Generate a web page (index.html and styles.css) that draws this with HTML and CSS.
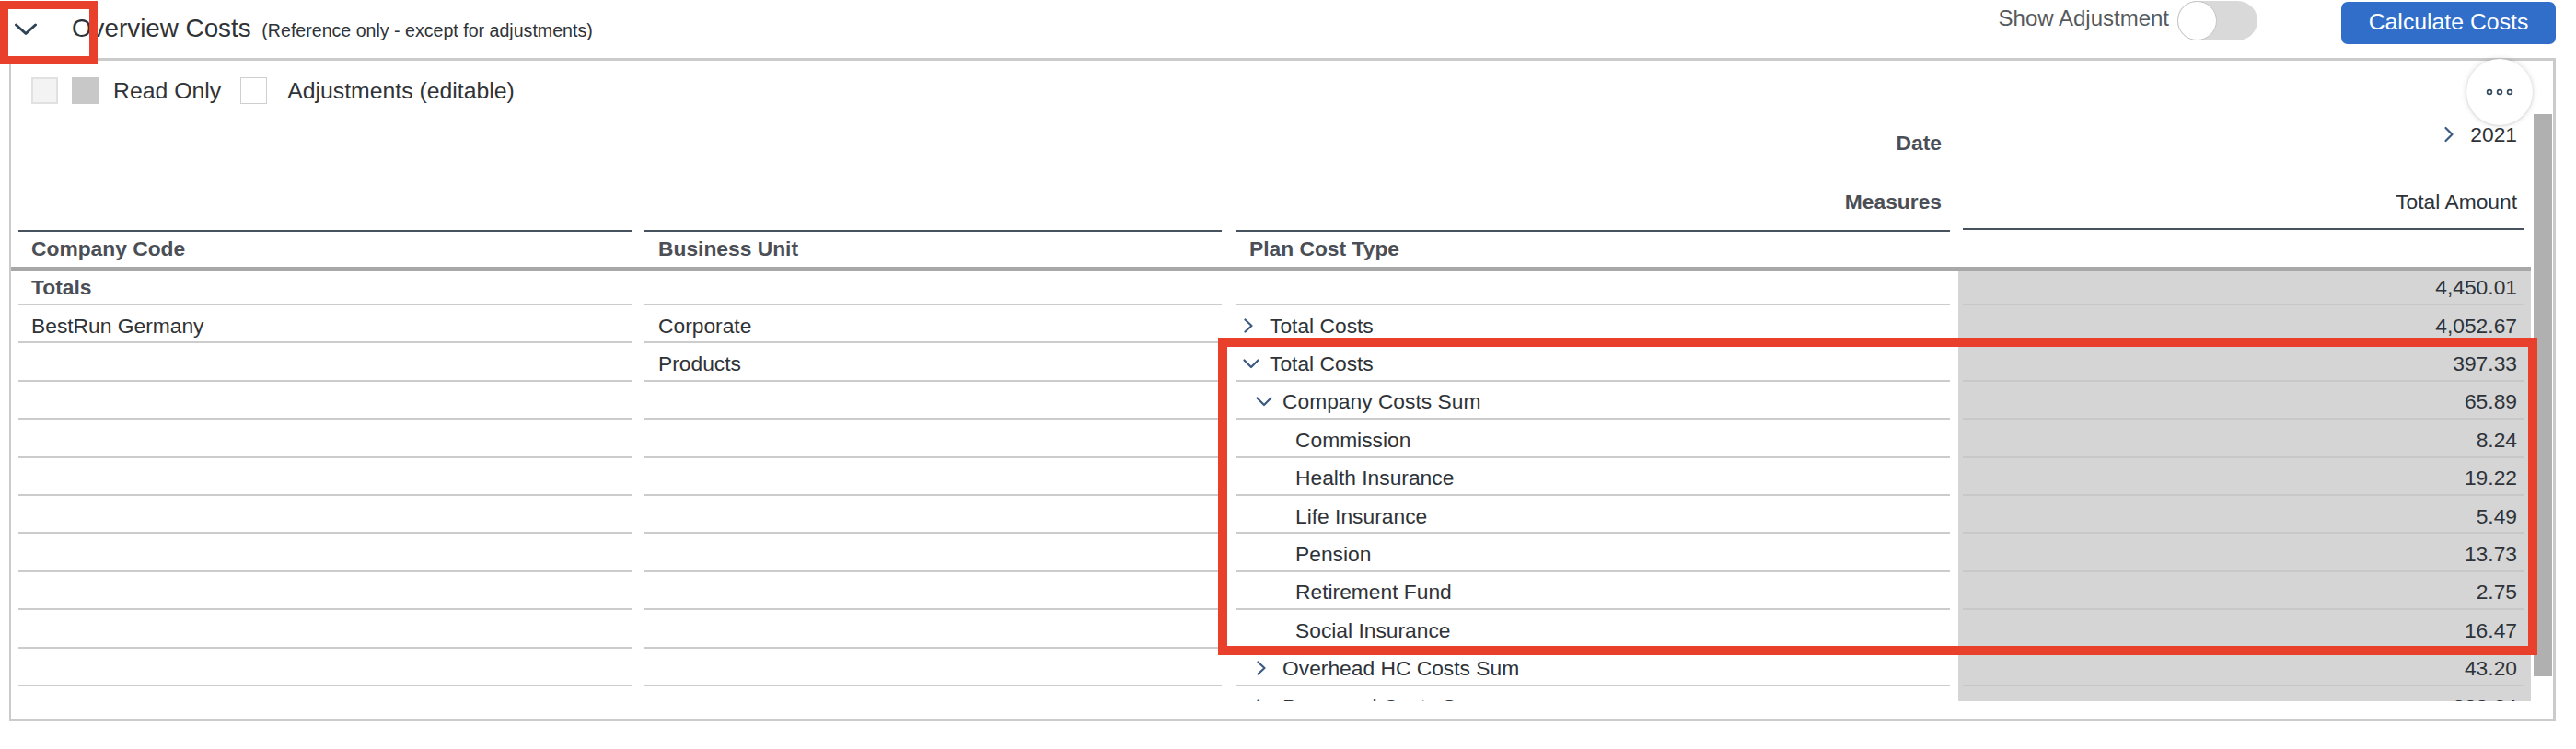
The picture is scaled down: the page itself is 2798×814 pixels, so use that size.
FILE: index.html
```html
<!DOCTYPE html>
<html lang="en">
<head>
<meta charset="utf-8">
<title>Overview Costs</title>
<link rel="stylesheet" href="styles.css">
</head>
<body>
<div class="page">
  <header class="bar">
    <div class="bar-left">
      <svg class="collapse" width="26" height="14" viewBox="0 0 26 14"><path d="M2.5 2 L13 11.5 L23.5 2" fill="none" stroke="#2f4358" stroke-width="3" stroke-linecap="round" stroke-linejoin="round"/></svg>
      <h1 class="title">Overview Costs <span class="subtitle">(Reference only - except for adjustments)</span></h1>
    </div>
    <div class="bar-right">
      <span class="toggle-label">Show Adjustment</span>
      <span class="toggle"><span class="knob"></span></span>
      <button class="btn">Calculate Costs</button>
    </div>
  </header>

  <section class="panel">
    <div class="panel-main">
      <div class="legend">
        <span class="swatch sw-empty"></span>
        <span class="swatch sw-ro"></span>
        <span class="lg-ro">Read Only</span>
        <span class="swatch sw-adj"></span>
        <span class="lg-adj">Adjustments (editable)</span>
      </div>

      <div class="table">
        <div class="row row-date">
          <div class="c1"></div>
          <div class="c2"></div>
          <div class="c3 hd-right">Date</div>
          <div class="c4"><div class="in in-date"><svg class="chev-r-lg" width="12" height="18" viewBox="0 0 12 18"><path d="M2.5 2 L9.5 9 L2.5 16" fill="none" stroke="#3a5a7f" stroke-width="2.2" stroke-linecap="round" stroke-linejoin="round"/></svg><span>2021</span></div></div>
        </div>
        <div class="row row-meas">
          <div class="c1"></div>
          <div class="c2"></div>
          <div class="c3 hd-right">Measures</div>
          <div class="c4"><div class="in in-meas">Total Amount</div></div>
        </div>
        <div class="row row-head">
          <div class="c1">Company Code</div>
          <div class="c2">Business Unit</div>
          <div class="c3 c3-head">Plan Cost Type</div>
          <div class="c4"><div class="in"></div></div>
        </div>

        <div class="row row-data first">
          <div class="c1 bold">Totals</div>
          <div class="c2"></div>
          <div class="c3"></div>
          <div class="c4"><div class="in">4,450.01</div></div>
        </div>
        <div class="row row-data">
          <div class="c1">BestRun Germany</div>
          <div class="c2">Corporate</div>
          <div class="c3 tree l1"><span class="tw"><svg width="12" height="16" viewBox="0 0 12 16"><path d="M2.5 1.5 L9.5 8 L2.5 14.5" fill="none" stroke="#3a5a7f" stroke-width="2.2" stroke-linecap="round" stroke-linejoin="round"/></svg></span>Total Costs</div>
          <div class="c4"><div class="in">4,052.67</div></div>
        </div>
        <div class="row row-data">
          <div class="c1"></div>
          <div class="c2">Products</div>
          <div class="c3 tree l1"><span class="tw"><svg width="18" height="11" viewBox="0 0 18 11"><path d="M1.5 1.5 L9 9 L16.5 1.5" fill="none" stroke="#3a5a7f" stroke-width="2.2" stroke-linecap="round" stroke-linejoin="round"/></svg></span>Total Costs</div>
          <div class="c4"><div class="in">397.33</div></div>
        </div>
        <div class="row row-data">
          <div class="c1"></div>
          <div class="c2"></div>
          <div class="c3 tree l2"><span class="tw"><svg width="18" height="11" viewBox="0 0 18 11"><path d="M1.5 1.5 L9 9 L16.5 1.5" fill="none" stroke="#3a5a7f" stroke-width="2.2" stroke-linecap="round" stroke-linejoin="round"/></svg></span>Company Costs Sum</div>
          <div class="c4"><div class="in">65.89</div></div>
        </div>
        <div class="row row-data">
          <div class="c1"></div>
          <div class="c2"></div>
          <div class="c3 tree l3"><span class="tw"></span>Commission</div>
          <div class="c4"><div class="in">8.24</div></div>
        </div>
        <div class="row row-data">
          <div class="c1"></div>
          <div class="c2"></div>
          <div class="c3 tree l3"><span class="tw"></span>Health Insurance</div>
          <div class="c4"><div class="in">19.22</div></div>
        </div>
        <div class="row row-data">
          <div class="c1"></div>
          <div class="c2"></div>
          <div class="c3 tree l3"><span class="tw"></span>Life Insurance</div>
          <div class="c4"><div class="in">5.49</div></div>
        </div>
        <div class="row row-data">
          <div class="c1"></div>
          <div class="c2"></div>
          <div class="c3 tree l3"><span class="tw"></span>Pension</div>
          <div class="c4"><div class="in">13.73</div></div>
        </div>
        <div class="row row-data">
          <div class="c1"></div>
          <div class="c2"></div>
          <div class="c3 tree l3"><span class="tw"></span>Retirement Fund</div>
          <div class="c4"><div class="in">2.75</div></div>
        </div>
        <div class="row row-data">
          <div class="c1"></div>
          <div class="c2"></div>
          <div class="c3 tree l3"><span class="tw"></span>Social Insurance</div>
          <div class="c4"><div class="in">16.47</div></div>
        </div>
        <div class="row row-data">
          <div class="c1"></div>
          <div class="c2"></div>
          <div class="c3 tree l2"><span class="tw"><svg width="12" height="16" viewBox="0 0 12 16"><path d="M2.5 1.5 L9.5 8 L2.5 14.5" fill="none" stroke="#3a5a7f" stroke-width="2.2" stroke-linecap="round" stroke-linejoin="round"/></svg></span>Overhead HC Costs Sum</div>
          <div class="c4"><div class="in">43.20</div></div>
        </div>
        <div class="row row-data">
          <div class="c1"></div>
          <div class="c2"></div>
          <div class="c3 tree l2"><span class="tw"><svg width="12" height="16" viewBox="0 0 12 16"><path d="M2.5 1.5 L9.5 8 L2.5 14.5" fill="none" stroke="#3a5a7f" stroke-width="2.2" stroke-linecap="round" stroke-linejoin="round"/></svg></span>Personnel Costs Sum</div>
          <div class="c4"><div class="in">288.24</div></div>
        </div>
      </div>
    </div>
    <div class="vscroll"><div class="thumb"></div></div>
  </section>

  <button class="more" aria-label="More"><svg width="30" height="8" viewBox="0 0 30 8"><circle cx="4" cy="4" r="2.4" fill="none" stroke="#354a5f" stroke-width="1.7"/><circle cx="15" cy="4" r="2.4" fill="none" stroke="#354a5f" stroke-width="1.7"/><circle cx="26" cy="4" r="2.4" fill="none" stroke="#354a5f" stroke-width="1.7"/></svg></button>

  <div class="mark mark-collapse"></div>
  <div class="mark mark-rows"></div>
</div>
</body>
</html>
```

FILE: styles.css
```css
* { box-sizing: border-box; }
html, body { margin: 0; padding: 0; background: #fff; }
body {
  font-family: "Liberation Sans", Arial, sans-serif;
  color: #2f3337;
}
.page {
  position: relative;
  width: 2798px;
  height: 814px;
  overflow: hidden;
}

/* ---------- top bar ---------- */
.bar {
  display: flex;
  justify-content: space-between;
  height: 63px;
  padding: 0 22px 0 15px;
}
.bar-left { display: flex; align-items: flex-start; }
.collapse { display: block; margin-top: 25px; flex: none; }
.title {
  margin: 15px 0 0 37px;
  font-size: 27.8px;
  line-height: 32px;
  font-weight: normal;
  color: #2f3337;
  white-space: nowrap;
}
.subtitle { font-size: 19.6px; margin-left: 4px; }

.bar-right { display: flex; align-items: flex-start; }
.toggle-label {
  margin-top: 7px;
  font-size: 24px;
  line-height: 26px;
  color: #555a5e;
  white-space: nowrap;
}
.toggle {
  display: flex;
  margin: 1px 0 0 9px;
  width: 87px;
  height: 43px;
  border-radius: 22px;
  background: #d9d9d9;
}
.knob {
  width: 43px;
  height: 43px;
  border-radius: 50%;
  background: #fff;
  border: 1.5px solid #c4c4c4;
}
.btn {
  margin: 2px 0 0 91px;
  width: 233px;
  height: 46px;
  padding: 0 0 3px;
  border: 0;
  border-radius: 7px;
  background: #306ec9;
  color: #fff;
  font-family: "Liberation Sans", Arial, sans-serif;
  font-size: 24.8px;
  line-height: 43px;
}

/* ---------- panel ---------- */
.panel {
  display: flex;
  margin-left: 10px;
  width: 2766px;
  height: 721px;
  border: 3px solid #cbcbcb;
  border-left-width: 2px;
}
.panel-main { width: 2737px; flex: none; }
.vscroll { width: 24px; flex: none; padding: 58px 0 0 3px; }
.thumb { width: 20px; height: 611px; background: #b0b0b0; }

.legend {
  display: flex;
  align-items: center;
  height: 29px;
  margin-top: 18px;
  padding-left: 22px;
  font-size: 24.8px;
  line-height: 29px;
  color: #2f3337;
}
.swatch { display: block; width: 29px; height: 29px; flex: none; }
.sw-empty { background: #f3f3f3; border: 2px solid #e1e1e1; }
.sw-ro { background: #c8c8c8; margin-left: 15px; }
.lg-ro { margin-left: 16px; }
.sw-adj { background: #fff; border: 1.5px solid #cfcfcf; margin-left: 21px; }
.lg-adj { margin-left: 22px; }

/* ---------- table ---------- */
.table {
  height: 649px;
  overflow: hidden;
  font-size: 22.8px;
  line-height: 26px;
}
.row { display: flex; padding-left: 8px; }
.c1 { width: 666px; flex: none; padding-left: 14px; white-space: nowrap; }
.c2 { width: 627px; flex: none; margin-left: 14px; padding-left: 15px; white-space: nowrap; }
.c3 { width: 776px; flex: none; margin-left: 15px; white-space: nowrap; }
.c4 { width: 622px; flex: none; margin-left: 9px; padding: 0 7px 0 5px; }
.c4 .in { height: 100%; text-align: right; padding-right: 8px; }

.bold { font-weight: bold; color: #4b4f55; }

.row-date { height: 67px; }
.row-date .hd-right { padding-top: 29px; }
.in-date {
  display: flex;
  justify-content: flex-end;
  align-items: center;
  padding-top: 20px;
  height: auto !important;
}
.in-date span { line-height: 26px; }
.chev-r-lg { display: block; margin-right: 17px; }

.row-meas { height: 70px; }
.row-meas .hd-right { padding-top: 26px; }
.in-meas { padding-top: 26px; border-bottom: 2px solid #46525e; }
.hd-right {
  text-align: right;
  padding-right: 9px;
  font-weight: bold;
  color: #4b4f55;
}

.row-head {
  height: 44px;
  border-bottom: 4px solid #a8a8a8;
  font-weight: bold;
  color: #4b4f55;
}
.row-head .c1, .row-head .c2, .row-head .c3 {
  border-top: 2px solid #46525e;
  padding-top: 5px;
}
.c3-head { padding-left: 15px; }

.row-data { height: 41.4px; }
.row-data.first { height: 38px; }
.row-data .c1, .row-data .c2, .row-data .c3 {
  padding-top: 8.7px;
  border-bottom: 2px solid #cccccc;
}
.row-data .c4 { background: #d5d5d5; }
.row-data .in {
  padding-top: 8.7px;
  border-bottom: 2px solid #c8c8c8;
  color: #2f3337;
}
.row-data.first .c1, .row-data.first .c2, .row-data.first .c3, .row-data.first .in { padding-top: 5px; }

.tree { display: flex; align-items: flex-start; }
.tw {
  display: flex;
  align-items: center;
  flex: none;
  width: 22px;
  height: 26px;
  padding-left: 1px;
  margin-right: 8px;
}
.tw svg { display: block; }
.l1 { padding-left: 7px; }
.l2 { padding-left: 21px; }
.l3 { padding-left: 35px; }

/* ---------- overlays ---------- */
.more {
  position: absolute;
  left: 2679px;
  top: 64px;
  width: 72px;
  height: 72px;
  padding: 0;
  border: 0;
  border-radius: 50%;
  background: #fff;
  box-shadow: 0 0 6px rgba(0, 0, 0, 0.16), 0 1px 3px rgba(0, 0, 0, 0.08);
  display: flex;
  align-items: center;
  justify-content: center;
}
.more svg { display: block; }

.mark {
  position: absolute;
  border: 9px solid #e8402a;
  pointer-events: none;
}
.mark-collapse { left: 0; top: 1px; width: 106px; height: 69px; }
.mark-rows { left: 1323px; top: 367px; width: 1433px; height: 345px; border-width: 10px; }
```
